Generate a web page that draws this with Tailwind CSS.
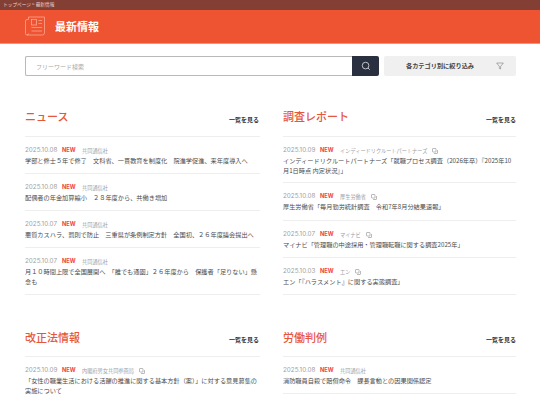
<!DOCTYPE html>
<html lang="ja">
<head>
  <meta charset="UTF-8">
  <title>最新情報</title>
  <script src="https://cdn.jsdelivr.net/npm/@tailwindcss/browser@4"></script>
</head>
<body class="bg-white overflow-hidden font-['Noto_Sans_CJK_JP','Noto_Sans',sans-serif]">
  <div class="w-[542px] h-[402px] overflow-hidden">
    <!-- パンくず -->
    <div class="w-[540px] h-[10px] bg-[#843f35] pl-[3px] flex items-center gap-[1px] text-[4.700px] text-[#e6d5d0]">
      <span>トップページ</span><span>&gt;</span><span>最新情報</span>
    </div>

    <!-- ページタイトル -->
    <div class="w-[540px] h-[33.500px] bg-[#ef5432] border-b border-[#f78f73] pl-[25px] flex items-center gap-[10px]">
      <svg width="20" height="20" viewBox="0 0 20 20" fill="none" stroke="#fbb29c" stroke-width="0.7">
        <path d="M3.500 3.500H2A1.500 1.500 0 0 0 .5 5v12.500A1.500 1.500 0 0 0 2 19h15.500a2 2 0 0 0 2-2V1h-16z"/>
        <path d="M3.500 17.500A1.500 1.500 0 0 1 2 19"/>
        <rect x="6.500" y="3.500" width="5" height="5.500"/>
        <path d="M13.500 4.500h3.500M13.500 7.500h3.500M6.500 11.500h10.500M6.500 15h10.500"/>
      </svg>
      <h1 class="text-[11px] font-bold text-white">最新情報</h1>
    </div>

    <!-- 検索 -->
    <div class="ml-[25px] mt-[12.500px] flex h-[20px]">
      <div class="w-[327px] border border-[#b9b9b9] border-r-0 rounded-l-[2px] pl-[10px] flex items-center text-[6px] text-[#a8a8a8]">フリーワード検索</div>
      <div class="w-[27px] bg-[#2b3040] rounded-r-[2px] flex items-center justify-center">
        <svg width="10" height="10" viewBox="0 0 24 24" fill="none" stroke="#d9dce3" stroke-width="2"><circle cx="11" cy="11" r="8"/><path d="m21 21-4.300-4.300"/></svg>
      </div>
      <div class="w-[132px] ml-[5px] bg-[#f0f0f0] rounded-[2px] flex items-center text-[6.200px] font-bold text-[#444] pl-[22px]">
        <span>各カテゴリ別に絞り込み</span>
        <svg class="ml-[22px]" width="8" height="8" viewBox="0 0 24 24" fill="none" stroke="#666" stroke-width="1.500"><path d="M2 3h20l-8 10v8l-4-2v-6z"/></svg>
      </div>
    </div>

    <div class="ml-[25px] grid grid-cols-[235px_233px] gap-x-[23px]">
      <!-- ニュース -->
      <section class="mt-[31px]">
        <div class="h-[30px] flex justify-between items-start border-b border-[#eeeeee]">
          <h2 class="text-[11px] leading-[16px] font-medium text-[#e6563a] mt-[1px]">ニュース</h2>
          <a class="text-[6px] font-bold text-[#333] mt-[7.500px] mr-[1px]">一覧を見る</a>
        </div>
        <ul>
          <li class="pt-[9px] pb-[7px] border-b border-[#eeeeee]">
            <div class="h-[9px] flex items-center text-[5.200px] text-[#a0a0a0]"><span class="w-[37px] text-[6.300px] font-['Inter']">2025.10.08</span><span class="w-[20px] text-[5.700px] font-['Inter'] font-bold text-[#ef4444]">NEW</span><span>共同通信社</span></div>
            <p class="mt-[1px] text-[6.200px] leading-[10px] text-[#4b4b4b]">学部と修士５年で修了　文科省、一貫教育を制度化　院進学促進、来年度導入へ</p>
          </li>
          <li class="pt-[9px] pb-[7px] border-b border-[#eeeeee]">
            <div class="h-[9px] flex items-center text-[5.200px] text-[#a0a0a0]"><span class="w-[37px] text-[6.300px] font-['Inter']">2025.10.08</span><span class="w-[20px] text-[5.700px] font-['Inter'] font-bold text-[#ef4444]">NEW</span><span>共同通信社</span></div>
            <p class="mt-[1px] text-[6.200px] leading-[10px] text-[#4b4b4b]">配偶者の年金加算縮小　２８年度から、共働き増加</p>
          </li>
          <li class="pt-[9px] pb-[7px] border-b border-[#eeeeee]">
            <div class="h-[9px] flex items-center text-[5.200px] text-[#a0a0a0]"><span class="w-[37px] text-[6.300px] font-['Inter']">2025.10.07</span><span class="w-[20px] text-[5.700px] font-['Inter'] font-bold text-[#ef4444]">NEW</span><span>共同通信社</span></div>
            <p class="mt-[1px] text-[6.200px] leading-[10px] text-[#4b4b4b]">悪質カスハラ、罰則で防止　三重県が条例制定方針　全国初、２６年度議会提出へ</p>
          </li>
          <li class="pt-[9px] pb-[7px] border-b border-[#eeeeee]">
            <div class="h-[9px] flex items-center text-[5.200px] text-[#a0a0a0]"><span class="w-[37px] text-[6.300px] font-['Inter']">2025.10.07</span><span class="w-[20px] text-[5.700px] font-['Inter'] font-bold text-[#ef4444]">NEW</span><span>共同通信社</span></div>
            <p class="mt-[1px] text-[6.200px] leading-[10px] text-[#4b4b4b]">月１０時間上限で全国展開へ　「誰でも通園」２６年度から　保護者「足りない」懸念も</p>
          </li>
        </ul>
      </section>

      <!-- 調査レポート -->
      <section class="mt-[31px]">
        <div class="h-[30px] flex justify-between items-start border-b border-[#eeeeee]">
          <h2 class="text-[11px] leading-[16px] font-medium text-[#e6563a] mt-[1px]">調査レポート</h2>
          <a class="text-[6px] font-bold text-[#333] mt-[7.500px]">一覧を見る</a>
        </div>
        <ul>
          <li class="pt-[9px] pb-[6px] border-b border-[#eeeeee]">
            <div class="h-[9px] flex items-center text-[5.200px] text-[#a0a0a0]"><span class="w-[37px] text-[6.300px] font-['Inter']">2025.10.09</span><span class="w-[20px] text-[5.700px] font-['Inter'] font-bold text-[#ef4444]">NEW</span><span>インディードリクルートパートナーズ</span>
              <svg class="ml-[5px]" width="6" height="6" viewBox="0 0 12 12" fill="none" stroke="#777" stroke-width="1"><rect x="1" y="1" width="7" height="7" rx="1"/><path d="M4 11h6a1 1 0 0 0 1-1V4"/></svg></div>
            <p class="mt-[1px] text-[6.200px] leading-[10px] text-[#4b4b4b]">インディードリクルートパートナーズ「就職プロセス調査（2026年卒）『2025年10月1日時点 内定状況』」</p>
          </li>
          <li class="pt-[9px] pb-[8px] border-b border-[#eeeeee]">
            <div class="h-[9px] flex items-center text-[5.200px] text-[#a0a0a0]"><span class="w-[37px] text-[6.300px] font-['Inter']">2025.10.08</span><span class="w-[20px] text-[5.700px] font-['Inter'] font-bold text-[#ef4444]">NEW</span><span>厚生労働省</span>
              <svg class="ml-[5px]" width="6" height="6" viewBox="0 0 12 12" fill="none" stroke="#777" stroke-width="1"><rect x="1" y="1" width="7" height="7" rx="1"/><path d="M4 11h6a1 1 0 0 0 1-1V4"/></svg></div>
            <p class="mt-[1px] text-[6.200px] leading-[10px] text-[#4b4b4b]">厚生労働省「毎月勤労統計調査　令和7年8月分結果速報」</p>
          </li>
          <li class="pt-[9px] pb-[7px] border-b border-[#eeeeee]">
            <div class="h-[9px] flex items-center text-[5.200px] text-[#a0a0a0]"><span class="w-[37px] text-[6.300px] font-['Inter']">2025.10.07</span><span class="w-[20px] text-[5.700px] font-['Inter'] font-bold text-[#ef4444]">NEW</span><span>マイナビ</span>
              <svg class="ml-[5px]" width="6" height="6" viewBox="0 0 12 12" fill="none" stroke="#777" stroke-width="1"><rect x="1" y="1" width="7" height="7" rx="1"/><path d="M4 11h6a1 1 0 0 0 1-1V4"/></svg></div>
            <p class="mt-[1px] text-[6.200px] leading-[10px] text-[#4b4b4b]">マイナビ「管理職の中途採用・管理職転職に関する調査2025年」</p>
          </li>
          <li class="pt-[9px] pb-[7px] border-b border-[#eeeeee]">
            <div class="h-[9px] flex items-center text-[5.200px] text-[#a0a0a0]"><span class="w-[37px] text-[6.300px] font-['Inter']">2025.10.03</span><span class="w-[20px] text-[5.700px] font-['Inter'] font-bold text-[#ef4444]">NEW</span><span>エン</span>
              <svg class="ml-[5px]" width="6" height="6" viewBox="0 0 12 12" fill="none" stroke="#777" stroke-width="1"><rect x="1" y="1" width="7" height="7" rx="1"/><path d="M4 11h6a1 1 0 0 0 1-1V4"/></svg></div>
            <p class="mt-[1px] text-[6.200px] leading-[10px] text-[#4b4b4b]">エン「『ハラスメント』に関する実態調査」</p>
          </li>
        </ul>
      </section>

      <!-- 改正法情報 -->
      <section class="mt-[32px]">
        <div class="h-[30px] flex justify-between items-start border-b border-[#eeeeee]">
          <h2 class="text-[11px] leading-[16px] font-medium text-[#e6563a] mt-[1.500px]">改正法情報</h2>
          <a class="text-[6px] font-bold text-[#333] mt-[7.500px] mr-[1px]">一覧を見る</a>
        </div>
        <ul>
          <li class="pt-[9px] pb-[7px] border-b border-[#eeeeee]">
            <div class="h-[9px] flex items-center text-[5.200px] text-[#a0a0a0]"><span class="w-[37px] text-[6.300px] font-['Inter']">2025.10.09</span><span class="w-[20px] text-[5.700px] font-['Inter'] font-bold text-[#ef4444]">NEW</span><span>内閣府男女共同参画局</span>
              <svg class="ml-[5px]" width="6" height="6" viewBox="0 0 12 12" fill="none" stroke="#777" stroke-width="1"><rect x="1" y="1" width="7" height="7" rx="1"/><path d="M4 11h6a1 1 0 0 0 1-1V4"/></svg></div>
            <p class="mt-[1px] text-[6.200px] leading-[10px] text-[#4b4b4b]">「女性の職業生活における活躍の推進に関する基本方針（案）」に対する意見募集の実施について</p>
          </li>
        </ul>
      </section>

      <!-- 労働判例 -->
      <section class="mt-[32px]">
        <div class="h-[30px] flex justify-between items-start border-b border-[#eeeeee]">
          <h2 class="text-[11px] leading-[16px] font-medium text-[#e6563a] mt-[1.500px]">労働判例</h2>
          <a class="text-[6px] font-bold text-[#333] mt-[7.500px]">一覧を見る</a>
        </div>
        <ul>
          <li class="pt-[9px] pb-[7px] border-b border-[#eeeeee]">
            <div class="h-[9px] flex items-center text-[5.200px] text-[#a0a0a0]"><span class="w-[37px] text-[6.300px] font-['Inter']">2025.10.08</span><span class="w-[20px] text-[5.700px] font-['Inter'] font-bold text-[#ef4444]">NEW</span><span>共同通信社</span></div>
            <p class="mt-[1px] text-[6.200px] leading-[10px] text-[#4b4b4b]">消防職員自殺で賠償命令　課長言動との因果関係認定</p>
          </li>
        </ul>
      </section>
    </div>
  </div>
</body>
</html>
